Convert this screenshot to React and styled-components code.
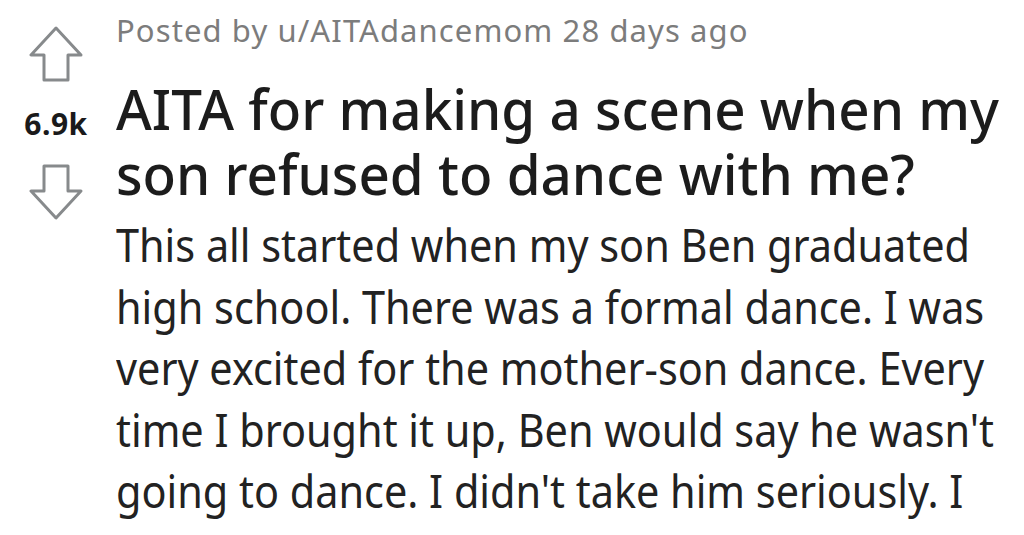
import React from 'react';
import styled, { createGlobalStyle } from 'styled-components';

const GlobalStyle = createGlobalStyle`
    html, body {
        margin: 0;
        padding: 0;
        background: #ffffff;
    }
`;

const Post = styled.div`
    display: flex;
    flex-flow: row nowrap;
    width: 1024px;
    height: 535px;
    overflow: hidden;
    background: #ffffff;
`;

const VoteColumn = styled.div`
    display: flex;
    flex-flow: column nowrap;
    align-items: center;
    width: 112px;
    padding-top: 26px;
    flex-shrink: 0;
`;

const VoteCount = styled.div`
    font-family: 'Noto Sans', sans-serif;
    font-weight: 700;
    font-size: 30px;
    letter-spacing: 0.5px;
    line-height: 1;
    color: #1a1a1b;
    margin: 27px 0 25px;
`;

const Content = styled.div`
    display: flex;
    flex-flow: column nowrap;
    padding-left: 4px;
`;

const Line = styled.div`
    white-space: nowrap;
    transform: scaleX(${p => p.squeeze || 1});
    transform-origin: left top;
`;

const Meta = styled(Line)`
    font-family: 'Noto Sans', sans-serif;
    font-size: 31px;
    letter-spacing: 1.1px;
    line-height: 40px;
    color: #7c7c7c;
    margin-top: 10px;
`;

const Title = styled(Line)`
    font-family: 'Noto Sans', sans-serif;
    font-weight: 500;
    font-size: 57px;
    line-height: 65px;
    color: #1c1c1c;
    margin-top: 26px;
`;

const Body = styled(Line)`
    font-family: 'Noto Sans', sans-serif;
    font-size: 45px;
    line-height: 61.5px;
    color: #222222;
    margin-top: 8px;
`;

function Arrow({ down }) {
    return (
        <svg width="54" height="56" viewBox="0 0 54 56" fill="none">
            <path
                d={down
                    ? 'M15 2 H39 V27 H52 L27 54 L2 27 H15 Z'
                    : 'M15 54 H39 V29 H52 L27 2 L2 29 H15 Z'}
                stroke="#878a8c"
                strokeWidth="3"
                strokeLinejoin="round"
            />
        </svg>
    );
}

export default function App() {
    return (
        <Post>
            <GlobalStyle />
            <VoteColumn>
                <Arrow />
                <VoteCount>6.9k</VoteCount>
                <Arrow down />
            </VoteColumn>
            <Content>
                <Meta>Posted by u/AITAdancemom 28 days ago</Meta>
                <Title squeeze={0.96}>
                    AITA for making a scene when my<br />
                    son refused to dance with me?
                </Title>
                <Body squeeze={0.92}>
                    This all started when my son Ben graduated<br />
                    high school. There was a formal dance. I was<br />
                    very excited for the mother-son dance. Every<br />
                    time I brought it up, Ben would say he wasn't<br />
                    going to dance. I didn't take him seriously. I
                </Body>
            </Content>
        </Post>
    );
}
